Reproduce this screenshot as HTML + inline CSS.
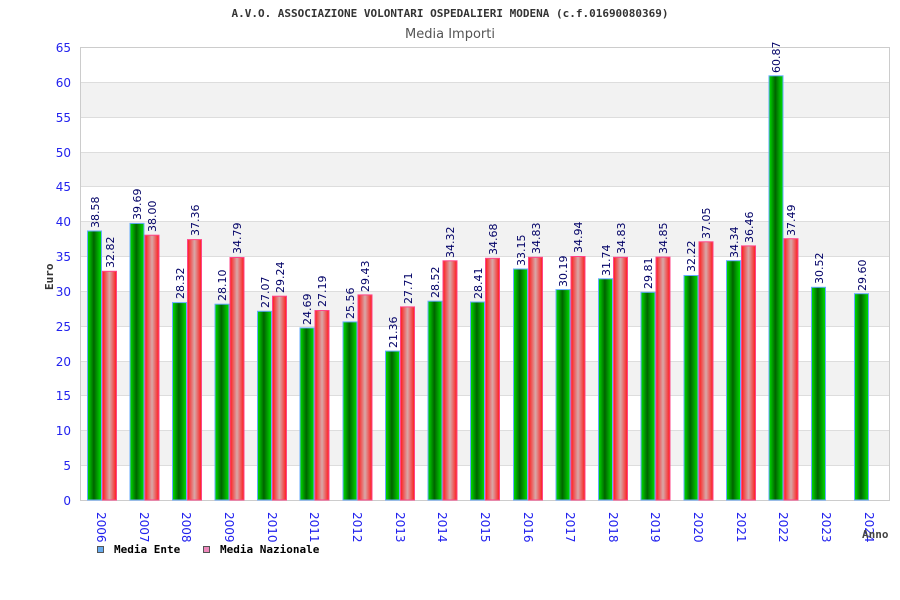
<!DOCTYPE html>
<html><head><meta charset="utf-8"><style>
html,body{margin:0;padding:0;background:#fff}
svg{display:block}
.v{font-family:"DejaVu Sans","Liberation Sans",sans-serif;font-size:11px;fill:#000066}
.yr{font-family:"DejaVu Sans","Liberation Sans",sans-serif;font-size:12px;fill:#2222ee}
.ax{font-family:"DejaVu Sans","Liberation Sans",sans-serif;font-size:12px;fill:#2222ee}
.m{font-family:"DejaVu Sans Mono","Liberation Mono",monospace;font-weight:bold;font-size:11px;fill:#333}
</style></head><body>
<svg width="900" height="600" xmlns="http://www.w3.org/2000/svg">
<defs>
<linearGradient id="g" x1="0" x2="1" y1="0" y2="0"><stop offset="0" stop-color="#00e000"/><stop offset="0.45" stop-color="#006400"/><stop offset="1" stop-color="#00e000"/></linearGradient>
<linearGradient id="r" x1="0" x2="1" y1="0" y2="0"><stop offset="0" stop-color="#ff1a1a"/><stop offset="0.5" stop-color="#d8a8a8"/><stop offset="1" stop-color="#ff1a1a"/></linearGradient>
</defs>
<text x="450" y="17" text-anchor="middle" class="m">A.V.O. ASSOCIAZIONE VOLONTARI OSPEDALIERI MODENA (c.f.01690080369)</text>
<text x="450" y="38" text-anchor="middle" style="font-family:'DejaVu Sans','Liberation Sans',sans-serif;font-size:13px;fill:#555">Media Importi</text>
<!-- bands -->
<g fill="#f2f2f2">
<rect x="80" y="82" width="810" height="35"/><rect x="80" y="152" width="810" height="35"/><rect x="80" y="221" width="810" height="35"/><rect x="80" y="291" width="810" height="35"/><rect x="80" y="361" width="810" height="35"/><rect x="80" y="430" width="810" height="35"/>
</g>
<g stroke="#ddd" stroke-width="1">
<line x1="80" x2="890" y1="82.5" y2="82.5"/><line x1="80" x2="890" y1="117.5" y2="117.5"/><line x1="80" x2="890" y1="152.5" y2="152.5"/><line x1="80" x2="890" y1="186.5" y2="186.5"/><line x1="80" x2="890" y1="221.5" y2="221.5"/><line x1="80" x2="890" y1="256.5" y2="256.5"/><line x1="80" x2="890" y1="291.5" y2="291.5"/><line x1="80" x2="890" y1="326.5" y2="326.5"/><line x1="80" x2="890" y1="361.5" y2="361.5"/><line x1="80" x2="890" y1="395.5" y2="395.5"/><line x1="80" x2="890" y1="430.5" y2="430.5"/><line x1="80" x2="890" y1="465.5" y2="465.5"/>
</g>
<rect x="80.5" y="47.5" width="809" height="453" fill="none" stroke="#ccc"/>
<g class="ax" text-anchor="end">
<text x="71" y="52">65</text><text x="71" y="87">60</text><text x="71" y="122">55</text><text x="71" y="157">50</text><text x="71" y="191">45</text><text x="71" y="226">40</text><text x="71" y="261">35</text><text x="71" y="296">30</text><text x="71" y="331">25</text><text x="71" y="366">20</text><text x="71" y="400">15</text><text x="71" y="435">10</text><text x="71" y="470">5</text><text x="71" y="505">0</text>
</g>
<text transform="translate(53,290) rotate(-90)" class="m">Euro</text>
<!-- green bars -->
<g fill="url(#g)" stroke="#66aaff" stroke-width="1">
<rect x="87.5" y="231" width="14" height="269"/>
<rect x="130" y="223.4" width="14" height="276.6"/>
<rect x="172.5" y="302.6" width="14" height="197.4"/>
<rect x="215" y="304.2" width="14" height="195.8"/>
<rect x="257.5" y="311.3" width="14" height="188.7"/>
<rect x="300" y="327.9" width="14" height="172.1"/>
<rect x="343" y="321.9" width="14" height="178.1"/>
<rect x="385.5" y="351.1" width="14" height="148.9"/>
<rect x="428" y="301.2" width="14" height="198.8"/>
<rect x="470.5" y="302" width="14" height="198"/>
<rect x="513.5" y="269" width="14" height="231"/>
<rect x="556" y="289.6" width="14" height="210.4"/>
<rect x="598.5" y="278.8" width="14" height="221.2"/>
<rect x="641" y="292.3" width="14" height="207.7"/>
<rect x="684" y="275.5" width="14" height="224.5"/>
<rect x="726.5" y="260.7" width="14" height="239.3"/>
<rect x="769" y="75.8" width="14" height="424.2"/>
<rect x="811.5" y="287.3" width="14" height="212.7"/>
<rect x="854.5" y="293.7" width="14" height="206.3"/>
</g>
<g fill="url(#r)" stroke="#ff4488" stroke-width="1">
<rect x="102.5" y="271.3" width="14" height="228.7"/>
<rect x="145" y="235.2" width="14" height="264.8"/>
<rect x="187.5" y="239.6" width="14" height="260.4"/>
<rect x="230" y="257.5" width="14" height="242.5"/>
<rect x="272.5" y="296.2" width="14" height="203.8"/>
<rect x="315" y="310.5" width="14" height="189.5"/>
<rect x="358" y="294.9" width="14" height="205.1"/>
<rect x="400.5" y="306.9" width="14" height="193.1"/>
<rect x="443" y="260.8" width="14" height="239.2"/>
<rect x="485.5" y="258.3" width="14" height="241.7"/>
<rect x="528.5" y="257.3" width="14" height="242.7"/>
<rect x="571" y="256.5" width="14" height="243.5"/>
<rect x="613.5" y="257.3" width="14" height="242.7"/>
<rect x="656" y="257.1" width="14" height="242.9"/>
<rect x="699" y="241.8" width="14" height="258.2"/>
<rect x="741.5" y="245.9" width="14" height="254.1"/>
<rect x="784" y="238.7" width="14" height="261.3"/>
</g>
<g class="v">
<text transform="translate(99,228) rotate(-90)">38.58</text>
<text transform="translate(114,268) rotate(-90)">32.82</text>
<text transform="translate(141,220) rotate(-90)">39.69</text>
<text transform="translate(156,232) rotate(-90)">38.00</text>
<text transform="translate(184,299) rotate(-90)">28.32</text>
<text transform="translate(199,236) rotate(-90)">37.36</text>
<text transform="translate(226,301) rotate(-90)">28.10</text>
<text transform="translate(241,254) rotate(-90)">34.79</text>
<text transform="translate(269,308) rotate(-90)">27.07</text>
<text transform="translate(284,293) rotate(-90)">29.24</text>
<text transform="translate(311,325) rotate(-90)">24.69</text>
<text transform="translate(326,307) rotate(-90)">27.19</text>
<text transform="translate(354,319) rotate(-90)">25.56</text>
<text transform="translate(369,292) rotate(-90)">29.43</text>
<text transform="translate(397,348) rotate(-90)">21.36</text>
<text transform="translate(412,304) rotate(-90)">27.71</text>
<text transform="translate(439,298) rotate(-90)">28.52</text>
<text transform="translate(454,258) rotate(-90)">34.32</text>
<text transform="translate(482,299) rotate(-90)">28.41</text>
<text transform="translate(497,255) rotate(-90)">34.68</text>
<text transform="translate(525,266) rotate(-90)">33.15</text>
<text transform="translate(540,254) rotate(-90)">34.83</text>
<text transform="translate(567,287) rotate(-90)">30.19</text>
<text transform="translate(582,253) rotate(-90)">34.94</text>
<text transform="translate(610,276) rotate(-90)">31.74</text>
<text transform="translate(625,254) rotate(-90)">34.83</text>
<text transform="translate(652,289) rotate(-90)">29.81</text>
<text transform="translate(667,254) rotate(-90)">34.85</text>
<text transform="translate(695,272) rotate(-90)">32.22</text>
<text transform="translate(710,239) rotate(-90)">37.05</text>
<text transform="translate(738,258) rotate(-90)">34.34</text>
<text transform="translate(753,243) rotate(-90)">36.46</text>
<text transform="translate(780,73) rotate(-90)">60.87</text>
<text transform="translate(795,236) rotate(-90)">37.49</text>
<text transform="translate(823,284) rotate(-90)">30.52</text>
<text transform="translate(866,291) rotate(-90)">29.60</text>
</g>
<g class="yr">
<text transform="translate(97,512) rotate(90)">2006</text>
<text transform="translate(140,512) rotate(90)">2007</text>
<text transform="translate(182,512) rotate(90)">2008</text>
<text transform="translate(225,512) rotate(90)">2009</text>
<text transform="translate(268,512) rotate(90)">2010</text>
<text transform="translate(310,512) rotate(90)">2011</text>
<text transform="translate(353,512) rotate(90)">2012</text>
<text transform="translate(396,512) rotate(90)">2013</text>
<text transform="translate(438,512) rotate(90)">2014</text>
<text transform="translate(481,512) rotate(90)">2015</text>
<text transform="translate(524,512) rotate(90)">2016</text>
<text transform="translate(566,512) rotate(90)">2017</text>
<text transform="translate(609,512) rotate(90)">2018</text>
<text transform="translate(651,512) rotate(90)">2019</text>
<text transform="translate(694,512) rotate(90)">2020</text>
<text transform="translate(737,512) rotate(90)">2021</text>
<text transform="translate(779,512) rotate(90)">2022</text>
<text transform="translate(822,512) rotate(90)">2023</text>
<text transform="translate(865,512) rotate(90)">2024</text>
</g>
<text x="862" y="538" class="m" style="fill:#444">Anno</text>
<rect x="97.5" y="546.5" width="6" height="6" fill="#66aaee" stroke="#555"/>
<text x="114" y="553" class="m" style="fill:#000">Media Ente</text>
<rect x="203.5" y="546.5" width="6" height="6" fill="#ee88bb" stroke="#555"/>
<text x="220" y="553" class="m" style="fill:#000">Media Nazionale</text>
</svg>
</body></html>
